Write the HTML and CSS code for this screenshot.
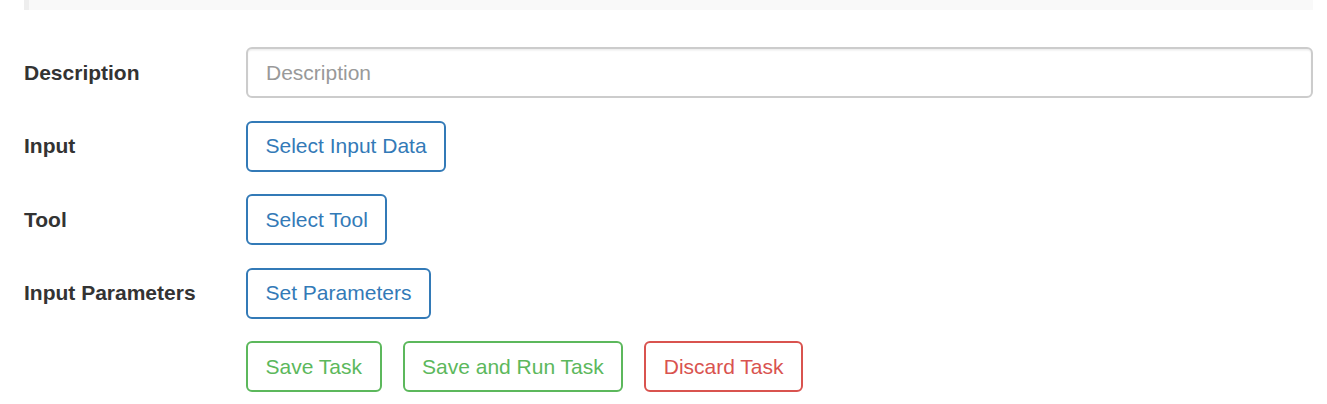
FILE: index.html
```html
<!DOCTYPE html>
<html>
<head>
<meta charset="utf-8">
<link rel="stylesheet" href="styles.css">
</head>
<body>
<div class="page">
  <div class="panel"></div>
  <form class="form">
    <div class="group">
      <label class="label">Description</label>
      <div class="control"><input class="input" type="text" placeholder="Description"></div>
    </div>
    <div class="group">
      <label class="label">Input</label>
      <div class="control"><button type="button" class="btn btn-blue">Select Input Data</button></div>
    </div>
    <div class="group">
      <label class="label">Tool</label>
      <div class="control"><button type="button" class="btn btn-blue">Select Tool</button></div>
    </div>
    <div class="group">
      <label class="label">Input Parameters</label>
      <div class="control"><button type="button" class="btn btn-blue">Set Parameters</button></div>
    </div>
    <div class="group">
      <div class="label"></div>
      <div class="control actions">
        <button type="button" class="btn btn-green">Save Task</button>
        <button type="button" class="btn btn-green">Save and Run Task</button>
        <button type="button" class="btn btn-red">Discard Task</button>
      </div>
    </div>
  </form>
</div>
</body>
</html>
```

FILE: styles.css
```css
* { box-sizing: border-box; }
html, body { margin: 0; padding: 0; background: #fff; }
body {
  font-family: "Liberation Sans", Arial, sans-serif;
  font-size: 21px;
  color: #333;
}
.page {
  padding: 0 14px 0 24px;
}
.panel {
  height: 10px;
  background: #f9f9f9;
  border-left: 5px solid #eeeeee;
  margin-bottom: 37px;
}
.form { margin: 0; }
.group {
  display: flex;
  align-items: flex-start;
  margin-bottom: 22.5px;
}
.label {
  flex: none;
  width: 222px;
  padding-top: 10.5px;
  line-height: 30px;
  font-weight: bold;
  color: #333;
}
.control {
  flex: 1;
  min-width: 0;
}
.input {
  display: block;
  width: 100%;
  height: 51px;
  padding: 0 18px;
  font-family: inherit;
  font-size: 21px;
  color: #555;
  background: #fff;
  border: 2px solid #cccccc;
  border-radius: 6px;
  box-shadow: inset 0 1.5px 1.5px rgba(0,0,0,.075);
  outline: none;
}
.input::placeholder { color: #999; }
.actions {
  display: flex;
  gap: 21px;
}
.btn {
  display: inline-flex;
  align-items: center;
  height: 51px;
  padding: 0 17.5px;
  font-family: inherit;
  font-size: 21px;
  line-height: 30px;
  background: #fff;
  border: 2px solid;
  border-radius: 6px;
  cursor: pointer;
}
.btn-blue { color: #337ab7; border-color: #337ab7; }
.btn-green { color: #5cb85c; border-color: #5cb85c; }
.btn-red { color: #d9534f; border-color: #d9534f; }
```
